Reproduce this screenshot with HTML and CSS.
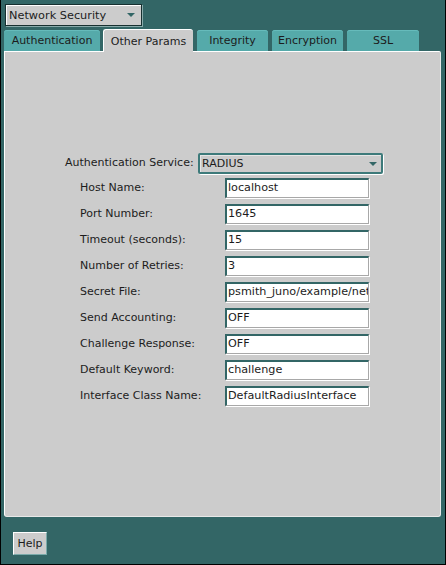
FILE: index.html
```html
<!DOCTYPE html>
<html>
<head>
<meta charset="utf-8">
<link rel="stylesheet" href="styles.css">
</head>
<body>
<div class="window">
  <div class="selector">
    <span class="selector-text">Network Security</span>
    <span class="arrow"></span>
  </div>
  <div class="tabs">
    <div class="tab w-auth">Authentication</div>
    <div class="tab active w-other">Other Params</div>
    <div class="tab w-int">Integrity</div>
    <div class="tab w-enc">Encryption</div>
    <div class="tab w-ssl">SSL</div>
  </div>
  <div class="panel">
    <div class="form">
      <div class="row-main">
        <span class="label-main">Authentication Service:</span>
        <div class="combo"><span>RADIUS</span><span class="arrow"></span></div>
      </div>
      <div class="row"><span class="label">Host Name:</span><div class="field">localhost</div></div>
      <div class="row"><span class="label">Port Number:</span><div class="field">1645</div></div>
      <div class="row"><span class="label">Timeout (seconds):</span><div class="field">15</div></div>
      <div class="row"><span class="label">Number of Retries:</span><div class="field">3</div></div>
      <div class="row"><span class="label">Secret File:</span><div class="field">psmith_juno/example/network</div></div>
      <div class="row"><span class="label">Send Accounting:</span><div class="field">OFF</div></div>
      <div class="row"><span class="label">Challenge Response:</span><div class="field">OFF</div></div>
      <div class="row"><span class="label">Default Keyword:</span><div class="field">challenge</div></div>
      <div class="row"><span class="label">Interface Class Name:</span><div class="field">DefaultRadiusInterface</div></div>
    </div>
  </div>
  <div class="footer">
    <div class="button">Help</div>
  </div>
</div>
</body>
</html>
```
FILE: styles.css
```css
* { box-sizing: border-box; }
html, body { margin: 0; padding: 0; }
body {
  font-family: "DejaVu Sans", sans-serif;
  font-size: 11px;
  color: #1c1c1c;
  background: #336666;
}
.window {
  width: 446px;
  height: 565px;
  background: #336666;
  border: 1px solid #000;
  border-top: 0;
  display: flex;
  flex-direction: column;
}
.selector {
  margin: 4px 0 0 4px;
  width: 137px;
  height: 22px;
  background: #cccccc;
  border: 1px solid #173030;
  box-shadow: inset 1px 1px 0 #ffffff, 1px 1px 0 #88aaaa;
  display: flex;
  align-items: center;
  justify-content: space-between;
  padding: 0 4px 0 3px;
}
.selector-text { font-size: 11.3px; }
.arrow {
  width: 0;
  height: 0;
  border-left: 4px solid transparent;
  border-right: 4px solid transparent;
  border-top: 4px solid #336666;
  margin-right: 2px;
}
.tabs {
  margin: 3px 0 0 3px;
  height: 22px;
  display: flex;
  align-items: flex-end;
}
.tab {
  height: 21px;
  background: #55aaaa;
  border-radius: 3px 3px 0 0;
  display: flex;
  align-items: center;
  justify-content: center;
  margin-right: 4px;
  box-shadow: inset 0 1px 0 #66bbbb;
}
.tab.active {
  background: #cccccc;
  border-top: 1px solid #ffffff;
  border-left: 1px solid #ffffff;
  box-shadow: none;
  position: relative;
  z-index: 1;
  margin-bottom: -1px;
  height: 23px;
}
.w-auth { width: 96px; margin-right: 3px; }
.w-other { width: 90px; }
.w-int { width: 71px; }
.w-enc { width: 71px; }
.w-ssl { width: 72px; }
.panel {
  margin-left: 3px;
  width: 437px;
  height: 466px;
  background: #cccccc;
  border-top: 1px solid #ffffff;
  border-left: 1px solid #ffffff;
  border-right: 1px solid #e8e8e8;
  border-bottom: 1px solid #e8e8e8;
  border-radius: 0 2px 3px 3px;
}
.form {
  padding: 101px 0 0 60px;
  display: flex;
  flex-direction: column;
  gap: 6px;
}
.row-main {
  display: flex;
  align-items: center;
  height: 21px;
  margin-bottom: -2px;
}
.label-main {
  width: 133px;
  margin-top: -3px;
}
.combo {
  width: 185px;
  height: 21px;
  background: #cccccc;
  border: 2px solid #3d7a7a;
  border-radius: 2px;
  box-shadow: inset 1px 1px 0 #e6e6e6, 1px 1px 0 #ffffff;
  display: flex;
  align-items: center;
  justify-content: space-between;
  padding: 0 2px 0 2px;
}
.row {
  display: flex;
  align-items: center;
  padding-left: 15px;
  height: 20px;
}
.label {
  width: 145px;
  margin-top: -1px;
}
.field {
  width: 144px;
  height: 20px;
  background: #ffffff;
  border-top: 2px solid #336666;
  border-left: 2px solid #336666;
  border-right: 1px solid #a8a8a8;
  border-bottom: 1px solid #a8a8a8;
  box-shadow: 1px 1px 0 #ffffff;
  padding: 0 0 0 1px;
  line-height: 16px;
  font-size: 11.2px;
  white-space: nowrap;
  overflow: hidden;
}
.footer {
  padding: 15px 0 0 12px;
}
.button {
  width: 34px;
  height: 23px;
  background: #cccccc;
  border-top: 1px solid #ffffff;
  border-left: 1px solid #ffffff;
  border-right: 1px solid #7aaaaa;
  border-bottom: 1px solid #7aaaaa;
  display: flex;
  align-items: center;
  justify-content: center;
}
```
